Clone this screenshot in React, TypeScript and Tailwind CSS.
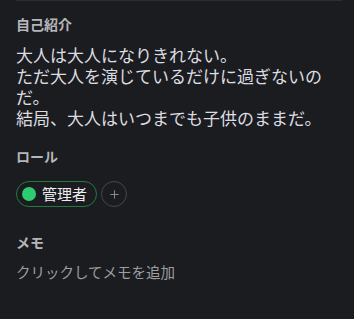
import { Plus } from "lucide-react";

function SectionTitle({ children, className = "" }: { children: React.ReactNode; className?: string }) {
  return <h3 className={`text-[14px] font-bold leading-5 text-[#b5b6ba] ${className}`}>{children}</h3>;
}

export default function App() {
  return (
    <div
      className="h-[319px] w-full bg-[#1b1c20] px-4"
      style={{ fontFamily: '"Noto Sans CJK JP", "Noto Sans", sans-serif' }}
    >
      <div className="h-px w-[326px] bg-[#2c2d32]" />

      <SectionTitle className="mt-[13px]">自己紹介</SectionTitle>
      <p className="mt-[10px] w-[316px] text-[17px] leading-[21px] text-[#dcdde0]">
        大人は大人になりきれない。
        <br />
        ただ大人を演じているだけに過ぎないのだ。
        <br />
        結局、大人はいつまでも子供のままだ。
      </p>

      <SectionTitle className="mt-[18px]">ロール</SectionTitle>
      <div className="mt-[15px] flex items-center gap-1">
        <div className="flex h-[26px] items-center gap-[6px] rounded-full border border-[#237a41] pl-[5px] pr-[9px]">
          <span className="h-[14px] w-[14px] rounded-full bg-[#2ecc71]" />
          <span className="text-[15px] leading-5 text-[#ececee]">管理者</span>
        </div>
        <button className="flex h-[26px] w-[26px] items-center justify-center rounded-full border border-[#46474c] text-[#8e9095]">
          <Plus size={13} strokeWidth={1.75} />
        </button>
      </div>

      <SectionTitle className="mt-[25px]">メモ</SectionTitle>
      <p className="mt-[10px] text-[14.5px] leading-5 text-[#9c9ea3]">クリックしてメモを追加</p>
    </div>
  );
}
